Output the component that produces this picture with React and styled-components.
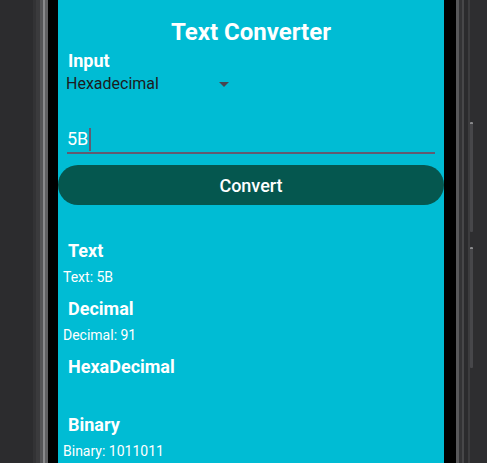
/* --------------------------------- IMPORT --------------------------------- */
import styled, { createGlobalStyle } from 'styled-components'

/* ---------------------------------- DATA ---------------------------------- */
const results = [
  { title: 'Text', value: 'Text: 5B' },
  { title: 'Decimal', value: 'Decimal: 91' },
  { title: 'HexaDecimal', value: '' },
  { title: 'Binary', value: 'Binary: 1011011' },
]

/* ----------------------------------- APP ---------------------------------- */
export default function App() {
  return (
    <>
      <GlobalStyles />

      <Device>
        <LeftBezel />

        <Screen>
          <Title>Text Converter</Title>

          <Label>Input</Label>

          <Spinner>
            <SpinnerText>Hexadecimal</SpinnerText>
            <Arrow />
          </Spinner>

          <Field>
            <FieldText>5B</FieldText>
            <Caret />
          </Field>

          <ConvertButton type='button'>Convert</ConvertButton>

          <Results>
            {results.map((r) => (
              <Group key={r.title}>
                <Heading>{r.title}</Heading>
                <Value>{r.value}</Value>
              </Group>
            ))}
          </Results>
        </Screen>

        <RightBezel>
          <SideKeys>
            <SideKey $height={110} />
            <SideKey $height={121} />
          </SideKeys>
        </RightBezel>
      </Device>
    </>
  )
}

/* --------------------------------- STYLES --------------------------------- */
const GlobalStyles = createGlobalStyle`
  * {
    box-sizing: border-box;
  }

  body {
    margin: 0;
    background-color: #2d2e30;
    font-family: Roboto, 'Noto Sans', sans-serif;
  }
`

const styles = {
  Device: styled.div`
    display: flex;

    width: 487px;
    height: 463px;

    overflow: hidden;
    background-color: #2d2e30;
  `,

  LeftBezel: styled.div`
    flex: 0 0 58px;

    background: linear-gradient(
      to right,
      #2c2c2e 0 33px,
      #333335 33px 36px,
      #3b3b3d 36px 40px,
      #555557 40px 43px,
      #88888a 43px 45px,
      #606062 45px 48px,
      #000 48px 58px
    );
  `,

  RightBezel: styled.div`
    flex: 1;

    background: linear-gradient(
      to right,
      #000 0 12px,
      #58585a 12px 15px,
      #333335 15px 18px,
      #474749 18px 20px,
      #2b2b2d 20px 24px,
      #3c3c3e 24px 26px,
      #2e2e30 26px
    );
  `,

  SideKeys: styled.div`
    display: flex;
    flex-direction: column;
    gap: 15px;

    padding-top: 122px;
    padding-left: 26px;
  `,

  SideKey: styled.div`
    width: 3px;
    height: ${({ $height }) => $height + 'px'};

    border-top: 2px solid #8a8a8c;
    border-radius: 1px;
    background-color: #47474a;
  `,

  Screen: styled.div`
    display: flex;
    flex-direction: column;

    flex: 0 0 386px;
    padding-top: 17px;

    background-color: #00bcd4;
  `,

  Title: styled.h1`
    margin: 0 0 4px;

    font-size: 24px;
    font-weight: 700;
    line-height: 30px;
    text-align: center;
    color: #fff;
  `,

  Label: styled.div`
    padding-left: 10px;

    font-size: 18px;
    font-weight: 700;
    line-height: 20px;
    color: #fff;
  `,

  Spinner: styled.div`
    display: flex;
    align-items: center;

    width: 179px;
    height: 20px;
    margin-top: 3px;
    padding-left: 8px;
    padding-right: 8px;
  `,

  SpinnerText: styled.span`
    font-size: 16px;
    line-height: 20px;
    color: #1d1b20;
  `,

  Arrow: styled.span`
    width: 0;
    height: 0;
    margin-left: auto;

    border-left: 5px solid transparent;
    border-right: 5px solid transparent;
    border-top: 5px solid #49454f;
  `,

  Field: styled.div`
    display: flex;
    align-items: center;

    margin: 33px 9px 0;
    padding-bottom: 1px;

    border-bottom: 2px solid #625b71;
  `,

  FieldText: styled.span`
    font-size: 18px;
    line-height: 24px;
    color: #fff;
  `,

  Caret: styled.span`
    width: 2px;
    height: 23px;
    margin-left: 1px;

    background-color: #625b71;
  `,

  ConvertButton: styled.button`
    height: 40px;
    margin-top: 11px;
    padding: 0;

    border: none;
    border-radius: 20px;
    background-color: #05574f;

    font-family: Roboto, 'Noto Sans', sans-serif;
    font-size: 18px;
    font-weight: 500;
    color: #fff;
  `,

  Results: styled.div`
    display: flex;
    flex-direction: column;
    gap: 13px;

    margin-top: 36px;
  `,

  Group: styled.div`
    display: flex;
    flex-direction: column;
  `,

  Heading: styled.div`
    margin-bottom: 8px;
    padding-left: 10px;

    font-size: 18px;
    font-weight: 700;
    line-height: 20px;
    color: #fff;
  `,

  Value: styled.div`
    min-height: 17px;
    padding-left: 5px;

    font-size: 14px;
    line-height: 17px;
    color: #fff;
  `,
}

const {
  Device,
  LeftBezel,
  RightBezel,
  SideKeys,
  SideKey,
  Screen,
  Title,
  Label,
  Spinner,
  SpinnerText,
  Arrow,
  Field,
  FieldText,
  Caret,
  ConvertButton,
  Results,
  Group,
  Heading,
  Value,
} = styles
